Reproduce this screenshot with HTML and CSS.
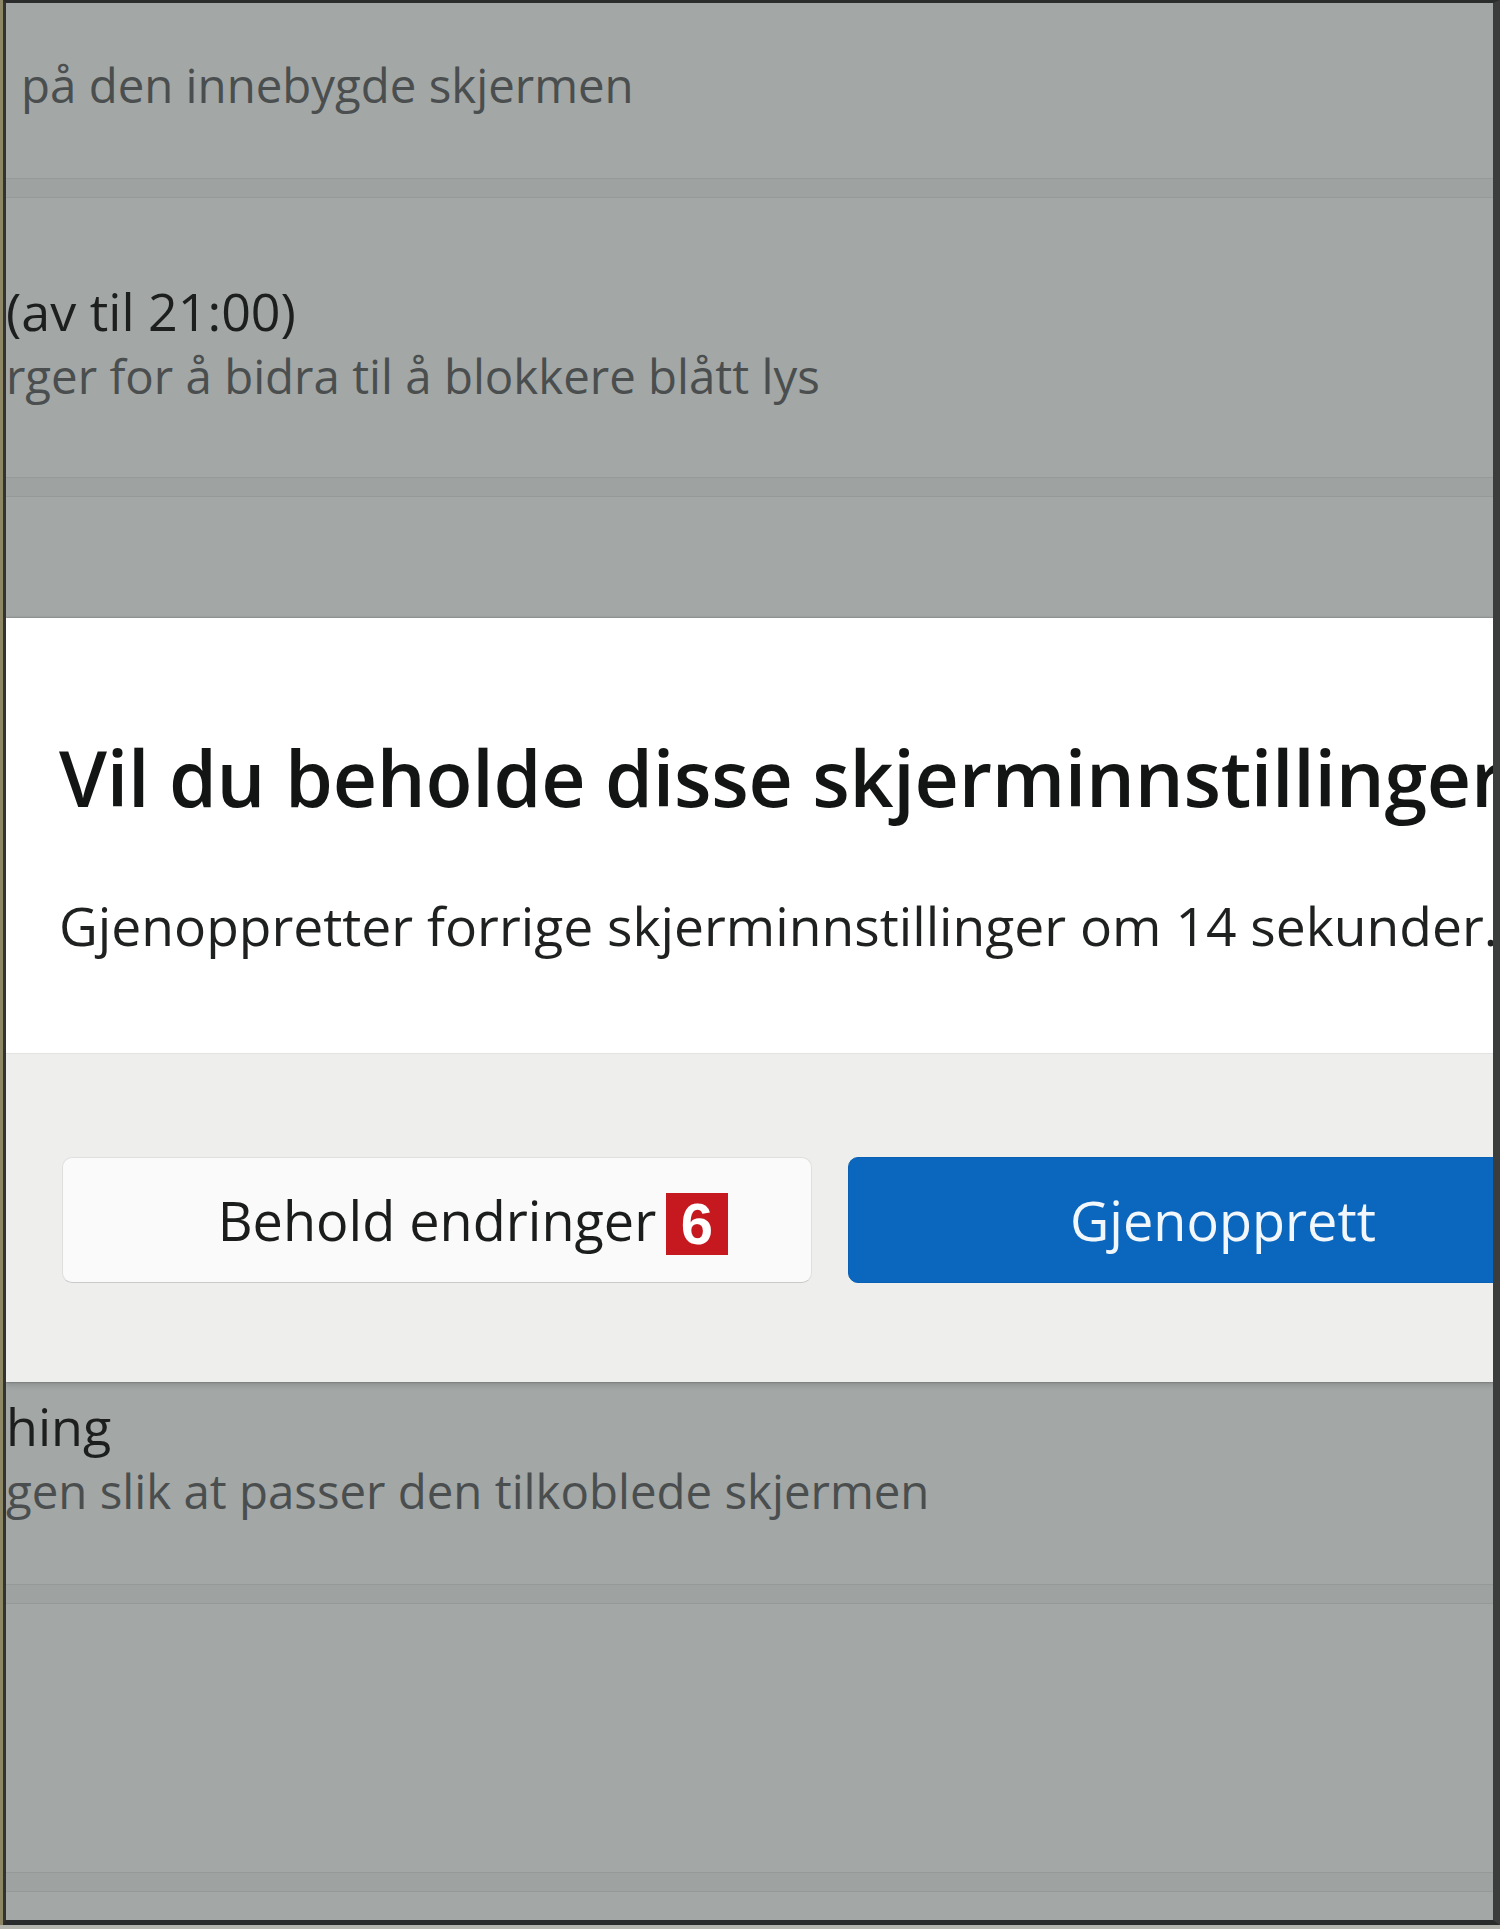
FILE: index.html
```html
<!DOCTYPE html>
<html lang="no">
<head>
<meta charset="utf-8">
<title>Vil du beholde disse skjerminnstillinger?</title>
<link rel="stylesheet" href="styles.css">
</head>
<body>
<div class="frame">
  <div class="screen">
    <div class="list">
      <section class="card card-1">
        <p class="sub sub-first">på den innebygde skjermen</p>
      </section>
      <section class="card card-2">
        <p class="title cut">(av til 21:00)</p>
        <p class="sub cut">rger for å bidra til å blokkere blått lys</p>
      </section>
      <section class="card card-3">
        <p class="title cut">hing</p>
        <p class="sub cut">gen slik at passer den tilkoblede skjermen</p>
      </section>
      <section class="card card-4"></section>
      <section class="card card-5"></section>
    </div>

    <div class="dialog">
      <div class="dialog-body">
        <h1 class="dialog-title">Vil du beholde disse skjerminnstillinger?</h1>
        <p class="dialog-text">Gjenoppretter forrige skjerminnstillinger om 14 sekunder.</p>
      </div>
      <div class="dialog-footer">
        <button class="btn btn-secondary">Behold endringer<span class="badge">6</span></button>
        <button class="btn btn-primary">Gjenopprett</button>
      </div>
    </div>
  </div>
</div>
</body>
</html>
```
FILE: styles.css
```css
html, body {
  margin: 0;
  padding: 0;
}

body {
  background: #b4b5ad;
  font-family: "Open Sans", "Noto Sans", sans-serif;
}

.frame {
  width: 1500px;
  height: 1925px;
  box-sizing: border-box;
  border-left: 3px solid #8d8765;
}

.screen {
  position: relative;
  height: 100%;
  box-sizing: border-box;
  overflow: hidden;
  background: #a3a7a6;
  border-top: 3px solid #2b2c2c;
  border-left: 3px solid #333432;
  border-right: 7px solid #3b3c3c;
  border-bottom: 5px solid #2a2b2b;
}

/* ---------- dimmed settings list behind the dialog ---------- */

.list {
  display: flex;
  flex-direction: column;
  gap: 18px;
  height: 100%;
  background: #9ea2a1;
}

.card {
  box-sizing: border-box;
  display: flex;
  flex-direction: column;
  background: #a3a7a6;
  border-top: 1px solid #959998;
  border-bottom: 1px solid #959998;
}

.card p {
  margin: 0;
  white-space: nowrap;
}

.title {
  font-size: 52px;
  line-height: 68px;
  color: #1d1f1f;
}

.sub {
  font-size: 47.4px;
  line-height: 62px;
  color: #4a4e4e;
}

.cut {
  margin-left: -6px;
}

.card-1 {
  border-top: none;
  padding: 51px 0 62px 15px;
}

.card-2 {
  padding: 79px 0 70px 0;
}

.card-3 {
  height: 1089px;
  justify-content: flex-end;
  padding-bottom: 62px;
}

.card-4 {
  height: 270px;
}

.card-5 {
  flex: 1;
  border-bottom: none;
}

/* ---------- dialog ---------- */

.dialog {
  position: absolute;
  top: 615px;
  left: 0;
  width: 1640px;
  box-shadow: 0 0 2px rgba(0, 0, 0, 0.35), 0 3px 6px rgba(0, 0, 0, 0.15);
}

.dialog-body {
  background: #ffffff;
  padding: 110px 0 92px 53px;
}

.dialog-title {
  margin: 0;
  font-size: 77px;
  line-height: 100px;
  font-weight: 600;
  letter-spacing: -0.25px;
  color: #131414;
  white-space: nowrap;
}

.dialog-text {
  margin: 63px 0 0;
  font-size: 53.4px;
  line-height: 70px;
  color: #1f2020;
  white-space: nowrap;
}

.dialog-footer {
  display: flex;
  gap: 36px;
  background: #eeefed;
  border-top: 1px solid #e3e4e2;
  padding: 103px 0 99px 56px;
}

.btn {
  position: relative;
  flex: none;
  width: 750px;
  height: 126px;
  box-sizing: border-box;
  border-radius: 10px;
  font-family: "Open Sans", "Noto Sans", sans-serif;
  font-size: 54px;
  display: flex;
  align-items: center;
  justify-content: center;
  padding: 0;
}

.btn-secondary {
  background: #f9faf9;
  color: #1b1c1c;
  border: 1px solid #dfe0de;
  border-bottom-color: #c9cac8;
}

.btn-primary {
  background: #0b66be;
  color: #f2f7fc;
  border: 1px solid #0a60b3;
}

.badge {
  position: absolute;
  left: 603px;
  top: 35px;
  width: 62px;
  height: 62px;
  background: #c5181f;
  color: #ffffff;
  font-family: "Liberation Sans", Arial, sans-serif;
  font-weight: 700;
  font-size: 58px;
  line-height: 62px;
  text-align: center;
}
```
